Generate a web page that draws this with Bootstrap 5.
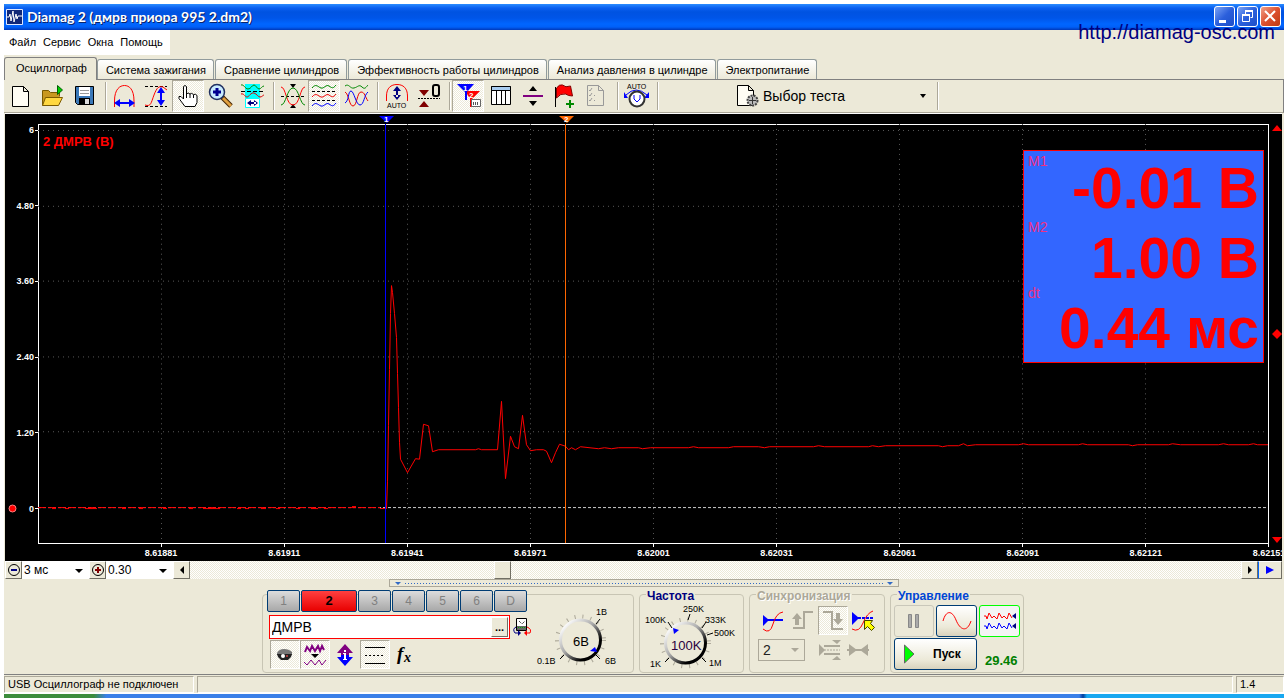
<!DOCTYPE html>
<html lang="ru">
<head>
<meta charset="utf-8">
<meta name="viewport" content="width=device-width, initial-scale=1">
<title>Diamag 2</title>
<link href="https://cdn.jsdelivr.net/npm/bootstrap@5.3.0/dist/css/bootstrap.min.css" rel="stylesheet">
<style>
:root{--face:#ece9d8;--line:#808080;--soft:#aca899}
body{font:11px/14px "Liberation Sans",Arial,sans-serif;color:#000;background:#fff}
button,select,input{font:inherit;color:inherit;border-radius:0}
svg{display:block;flex:none}
svg text{font-family:"Liberation Sans",Arial,sans-serif}
.app{padding:4px 4px 0;background:#fff}
.win{background:var(--face)}
.titlebar{height:26px;padding:0 3px 0 2px;color:#fff;font:bold 14px/24px Lato,"Open Sans",sans-serif;text-shadow:1px 1px 0 #0a246a;
 background:linear-gradient(#2a8cff 0,#0a5ff0 4px,#0053e1 8px,#0055e8 14px,#0066ff 20px,#0060f8 23px,#0038b8 26px)}
.capbtns{gap:2px;padding-top:2px}
.capbtn{width:21px;height:21px;padding:0;border:1px solid #fff;border-radius:3px;background:linear-gradient(135deg,#7ba3f5,#2b5fdc 50%,#1d4fc8)}
.capbtn.close-x{background:linear-gradient(135deg,#f0a088,#dc5030 50%,#c03a10)}
.site{top:17px;right:9px;font-size:20px;line-height:23px;color:#000080;text-decoration:none;z-index:2}
.menubar{height:25px}
.menubar ul{background:#fff;padding:0 7px 0 5px;gap:7px}
.menubar a{color:#000;text-decoration:none;line-height:25px}
.tabs{height:25px;gap:1px;border-bottom:1px solid var(--line)}
.tabs button{height:20px;padding:0 7px 0 8px;border:1px solid #919b9c;border-bottom:0;border-radius:3px 3px 0 0;background:linear-gradient(#fff,#ece9d8);white-space:nowrap}
.tabs button.on{height:23px;padding:0 9px 3px 11px;margin-right:-1px;margin-bottom:-1px;background:var(--face);border-color:var(--line)}
.tools{height:33px;border-bottom:1px solid var(--soft);border-right:1px solid var(--line)}
.tool{width:32px;height:32px;padding:0;border:1px solid transparent;background:none}
.sep{width:8px;height:28px;position:relative}
.sep::after{content:"";display:block;width:2px;height:28px;margin-left:5px;border-left:1px solid var(--soft);border-right:1px solid #fff}
.testbtn{width:200px;margin-left:72px;padding:0 6px 0 5px;border:0;background:none;font-size:14px}
.caret{width:0;height:0;border:3px solid transparent;border-top:4px solid #000;border-bottom:0}
.scope{flex:1 1 auto;min-height:448px;margin:0 2px 0 1px;background:#000;color:#fff;grid-template:10px 1fr 17px/33px 1fr 13px;overflow:hidden;font-weight:bold;border-top:1px solid #fff}
.plot{border:1px solid #fff;grid-area:2/2}
.plot>svg{position:absolute;left:-1px;top:-1px;width:calc(100% + 1px);height:calc(100% + 1px)}
.heads{grid-area:1/2}
.heads svg{position:absolute;top:1px;margin-left:-7px}
.ylab{grid-area:2/1;height:93%;font-size:9px;line-height:12px}
.ylab div::after{content:"";width:3px;height:1px;background:#fff;margin-left:1px}
.zero{left:3px;bottom:2px}
.xlab{grid-area:3/2;margin:0 -5% 0 5%;font-size:9px;line-height:18px}
.xlab div{background:linear-gradient(#fff,#fff) 50% 0/1px 3px no-repeat}
.rmarks{grid-area:2/3;padding-left:3px}
.channame{left:4px;top:10px;font-size:13px;color:#f00}
.readout{right:4px;top:25px;width:241px;height:213px;background:#36f;border:1px solid #f00;padding:2px 4px;color:#f00}
.readout .names{font-weight:normal;font-size:14px;line-height:16px;color:#f03080;display:grid;grid-auto-rows:66px}
.readout .vals{font-size:57px;line-height:70px;white-space:nowrap;text-align:right}
.bar{height:18px;background:repeating-conic-gradient(#fff 0 25%,#ece9d8 0 50%) 0 0/2px 2px;margin:0 2px 0 1px}
.bev{width:17px;height:18px;padding:0;border:1px solid;border-color:#fff #716f64 #716f64 #fff;background:var(--face);display:flex;align-items:center;justify-content:center}
.bev.fwd{width:24px;border-left-color:#06f}
.dd{position:relative}
.bar .dd{width:67px}
.dd select{appearance:none;width:100%;height:18px;border:0;background:#fff;padding:0 2px;font-size:12px}
.dd::after{content:"";position:absolute;right:6px;top:8px;border:4px solid transparent;border-top-color:#000;border-bottom:0;pointer-events:none}
.thumbgap{width:304px}
.splitter{width:510px;height:8px;border:1px solid var(--soft);padding:0 5px}
.splitter i{height:1px;background:repeating-linear-gradient(90deg,#316ac5 0 1px,transparent 1px 3px)}
.splitter b{border:3px solid transparent;border-top-color:#316ac5;border-bottom:0}
.panel{padding:7px 2px 1px 0;gap:5px;border-bottom:1px solid var(--line)}
.grp{position:relative;height:79px;border:1px solid #c8c5b4;border-radius:4px}
.grp legend{position:absolute;top:-6px;left:6px;width:auto;margin:0;padding:0 1px;font:bold 12px/14px "Liberation Sans",sans-serif;background:var(--face)}
.g-chan{width:372px}.g-chan>div{width:272px}.g-freq{width:105px}.g-sync{width:136px}.g-ctl{width:134px}
.g-freq legend{color:#000080}.g-sync legend{color:var(--soft);text-shadow:1px 1px 0 #fff}.g-ctl legend{color:#0046d5}
.chs{margin:-5px 0 3px 4px;gap:1px}
.chs button{width:33px;height:22px;border:1px solid #003c74;border-radius:2px;background:linear-gradient(#dcdcdc,#a8a8a8);color:#808080;font-size:12px;padding:0}
.chs button.live{width:56px;background:linear-gradient(#ff4040,#e80000);color:#000;font-weight:bold;font-size:13px}
.namerow{height:24px;gap:3px;margin:0 0 1px 6px}
.namebox{width:241px;height:24px;border:1px solid #f00;background:#fff}
.namebox input{min-width:0;border:0;padding:0 2px;font-size:14px;background:none;outline:0}
.namebox button{height:20px;margin:1px;font-weight:bold;line-height:8px}
.optrow{padding-left:7px}
.sq{width:30px;height:29px;padding:0;border:1px solid transparent;background:none;display:flex;align-items:center;justify-content:center}
.down{border-color:var(--soft) #fff #fff var(--soft);background:repeating-conic-gradient(#fff 0 25%,#ece9d8 0 50%) 0 0/2px 2px}
.serif{font:italic bold 19px "Liberation Serif",serif}
.serif-s{font:italic bold 14px "Liberation Serif",serif}
.sync{padding:11px 4px 0 8px}
.ctl{display:grid;grid-template-columns:40px 41px 41px;gap:1px 2px;padding:10px 0 0 3px}
.ctl button{height:32px;border:1px solid #003c74;border-radius:3px;background:linear-gradient(#fff,#ece9d8 70%,#d8d2bd);padding:0;display:flex;align-items:center;justify-content:center}
.ctl .off{border-color:#c9c7ba;background:var(--face)}
.ctl .lit{border-color:#0f0;background:#f4f4f4}
.ctl .run{grid-column:span 2;font-weight:bold;font-size:12px;justify-content:flex-start;padding-left:9px;gap:18px}
.fps{color:#008000;font-weight:bold;font-size:13px;padding:16px 0 0 6px}
.sync select{width:47px;height:22px;border:1px solid var(--soft);background:var(--face);padding:0 4px;font-size:14px;opacity:1;color:#222}
.sync .dd{height:22px}
.sync .dd::after{border-top-color:var(--soft);top:9px}
.status{height:18px;gap:3px;padding-top:1px}
.status div{border:1px solid;border-color:var(--soft) #fff #fff var(--soft);padding:0 3px;line-height:15px;white-space:nowrap}
.status .st-dev{width:190px}.status .st-ver{width:48px}
.taskbar{height:4px;margin-top:1px;background:linear-gradient(90deg,#3c8c3c 0 7%,#3a80e8 8% 84%,#003c9c 84.3%,#18a8f0 84.6%)}
</style>
</head>
<body>
<div class="app min-vh-100 d-flex flex-column">
<div class="win d-flex flex-column flex-grow-1 position-relative">
<header class="titlebar d-flex align-items-center">
 <svg width="17" height="16" viewBox="0 0 17 16"><path fill="#102878" stroke="#dfe8ff" d="M.5.5h16v15H.5z"/><path fill="none" stroke="#fff" d="M1 8h2l1-3 1 7 2-10 1 11 2-8 1 5 1-3h4"/></svg>
 <span class="ms-1 flex-grow-1">Diamag 2 (дмрв приора 995 2.dm2)</span>
 <div class="capbtns d-flex align-self-start">
  <button class="capbtn" aria-label="Свернуть"><svg width="19" height="19"><path fill="#fff" d="M4 13h7v3H4z"/></svg></button>
  <button class="capbtn" aria-label="Восстановить"><svg width="19" height="19" fill="none" stroke="#fff"><path d="M7.500 7V4.500h7v6h-2M4.500 8.500h7v6h-7z"/><path d="M7 4h8M4 8h8" stroke-width="2"/></svg></button>
  <button class="capbtn close-x" aria-label="Закрыть"><svg width="19" height="19"><path stroke="#fff" stroke-width="2" d="M4 4l10 10M14 4L4 14"/></svg></button>
 </div>
</header>
<a class="site position-absolute" href="#site">http://diamag-osc.com</a>
<nav class="menubar d-flex"><ul class="d-flex list-unstyled m-0">
 <li><a href="#file">Файл</a></li><li><a href="#service">Сервис</a></li><li><a href="#windows">Окна</a></li><li><a href="#help">Помощь</a></li></ul></nav>
<nav class="tabs d-flex align-items-end">
 <button class="on">Осциллограф</button><button>Система зажигания</button><button>Сравнение цилиндров</button><button>Эффективность работы цилиндров</button><button>Анализ давления в цилиндре</button><button>Электропитание</button>
</nav>

<div class="tools d-flex align-items-center">
 <button class="tool" aria-label="Новый"><svg width="30" height="30"><path fill="#fffdf4" stroke="#000" d="M7.500 5.500h11l5 5v15h-16zM18.500 5.500v5h5"/></svg></button>
 <button class="tool" aria-label="Открыть"><svg width="30" height="30"><path fill="#c89820" stroke="#7a5a00" d="M5.500 24.500v-15h6l2 2h9v4"/><path fill="#ffd840" stroke="#7a5a00" d="M5.500 24.500l3-8h17l-4 8z"/><path fill="#00d000" stroke="#006000" d="M20.500 4.500v9l5-4.500z"/></svg></button>
 <button class="tool" aria-label="Сохранить"><svg width="30" height="30"><path fill="#3a78b8" stroke="#000" d="M6.500 5.500h18v18h-16l-2-2z"/><path fill="#fff" d="M10 6h11v9H10z"/><path stroke="#999" d="M11 9.500h9M11 12.500h9"/><path fill="#000" d="M10 17h11v6H10z"/><path fill="#ddd" d="M16 18h4v5h-4z"/></svg></button>
 <span class="sep"></span>
 <button class="tool" aria-label="По горизонтали"><svg width="30" height="30"><path fill="none" stroke="#f00" d="M5.500 26v-6C5.500 8 11 4.500 15.500 4.500S25 8 25 20v6"/><path fill="#00f" d="M5 22l6-4v8zM26 22l-6-4v8z"/><path stroke="#00f" stroke-width="2" d="M8 22h14"/></svg></button>
 <button class="tool" aria-label="По вертикали"><svg width="30" height="30"><path stroke="#000" stroke-dasharray="3 2" d="M4 5.500h22M4 25.500h22"/><path fill="none" stroke="#f00" d="M4 24c6 2 6-2 9-10s5-9 9-8l4 3"/><path fill="#00f" d="M20 6l4 6h-8zM20 25l4-6h-8z"/><path stroke="#00f" stroke-width="2" d="M20 10v12"/></svg></button>
 <button class="tool down" aria-label="Рука"><svg width="30" height="30"><path fill="#fff" stroke="#000" d="M10.500 18V5.500q1.500-2 3 0V13q1.500-2 3.500 0 1.500-1.500 3.500.5 2-1 3.500 1v7l-2 4h-10l-6-8q-1-3 2-2zM13.500 13v4M17 13v4M20.500 14v3"/></svg></button>
 <button class="tool" aria-label="Увеличить"><svg width="30" height="30"><path stroke="#402000" stroke-width="5" d="M17 16l9 9"/><path stroke="#e0a040" stroke-width="3" d="M18 17l8 8"/><circle cx="12" cy="11" r="7.500" fill="#c8ecff" stroke="#203060" stroke-width="1.500"/><path stroke="#000090" stroke-width="3" d="M12 7v8M8 11h8"/></svg></button>
 <button class="tool" aria-label="Окно"><svg width="30" height="30"><path fill="#0ff" d="M8 3h15v14H8z"/><path fill="#fff" stroke="#0ff" d="M8.500 17.500h14v9h-14z"/><path stroke="#000" stroke-dasharray="4 2" d="M4 10.500h23"/><path fill="none" stroke="#080" d="M4 4c3-1 4 4 7 4s4-4 6-4 3 4 5 4 3-3 5-3"/><path fill="none" stroke="#d00" d="M4 13c3-1 4 3 6 3s4-5 7-4 4 4 6 4 3-2 4-2"/><path fill="#000080" d="M10 22l4-3v6zM21 22l-4-3v6zM12 21h7v2h-7z"/></svg></button>
 <span class="sep"></span>
 <button class="tool" aria-label="Инверсия"><svg width="30" height="30"><path fill="#000" d="M13 3h6l-3 4zM13 27h6l-3-4z"/><path stroke="#000" stroke-dasharray="3 2" d="M4 15.500h24"/><path fill="none" stroke="#f00" d="M4 6c5 0 5 18 12 18s7-18 12-18"/><path fill="none" stroke="#080" d="M4 24c5 0 6-17 12-17s7 17 12 17"/></svg></button>
 <button class="tool down" aria-label="Раздельно"><svg width="30" height="30" fill="none"><path stroke="#080" d="M3 7c4-5 6-1 9 0s5-4 8-2 4 3 7-1"/><path stroke="#e00" d="M3 16c4-5 6-1 9 0s5-4 8-2 4 3 7-1"/><path stroke="#00f" d="M3 25c4-5 6-1 9 0s5-4 8-2 4 3 7-1"/><path stroke="#000" stroke-dasharray="3 2" d="M3 10.500h25M3 19.500h25"/></svg></button>
 <button class="tool" aria-label="Вместе"><svg width="30" height="30" fill="none"><path stroke="#080" d="M4 5c4-3 5 3 9 2s5-4 8-1 4 0 6-2"/><path stroke="#e00" d="M4 11c4 2 4 14 8 14s4-14 8-14 4 5 7 9"/><path stroke="#00f" d="M4 22c4-2 3-12 6-12s5 14 9 14 4-10 8-13"/></svg></button>
 <span class="sep"></span>
 <button class="tool" aria-label="Авто амплитуда"><svg width="30" height="30"><path fill="none" stroke="#f00" d="M5.500 20V15C5.500 7 10 3.500 16 3.500S26.500 7 26.500 15v5"/><path fill="#000080" d="M16 5l4 5h-8zM16 19l4-5h-8zM15 8h2v8h-2z"/><text x="6" y="27" font-size="7">AUTO</text></svg></button>
 <button class="tool" aria-label="Ноль"><svg width="30" height="30"><path fill="#800000" d="M6 9h10l-5 6zM6 26h10l-5-6z"/><path stroke="#000" stroke-dasharray="2 1" d="M5 17.500h22"/><rect x="20" y="4" width="6" height="11" rx="2" fill="none" stroke="#000" stroke-width="2"/></svg></button>
 <span class="sep"></span>
 <button class="tool down" aria-label="Маркеры"><svg width="30" height="30"><path fill="#f00" d="M12 10h15l-9 9zM17 17h2v9h-2z"/><path fill="#00f" d="M4 3h17l-8 9zM12 10h2v9h-2z"/><text x="10" y="10" font-size="8" font-weight="bold" fill="#fff">1</text><text x="16" y="17" font-size="8" font-weight="bold" fill="#fff">2</text><path fill="#fff" stroke="#666" d="M18.500 18.500h9v7h-9z"/><path stroke="#555" d="M20.500 21v3M22.500 21v3M24.500 21v3"/></svg></button>
 <button class="tool" aria-label="Таблица"><svg width="30" height="30"><path fill="#fff" stroke="#000" d="M6.500 5.500h19v18h-19z"/><path fill="#a8ccf0" stroke="#000" d="M6.500 5.500h19v4h-19z"/><path stroke="#000" d="M11.500 10v14M16.500 10v14M20.500 10v14"/></svg></button>
 <button class="tool" aria-label="Разделить"><svg width="30" height="30"><path fill="#000" d="M12 10h8l-4-5zM12 20h8l-4 5z"/><path fill="#800080" d="M6 14h20v2H6z"/></svg></button>
 <button class="tool" aria-label="Добавить флаг"><svg width="30" height="30"><path fill="#f00" stroke="#800000" d="M7.500 17V7q3-4 6-3 3 3 8 1l2 10q-4 0-7-2-5-1-9 4"/><path stroke="#000" d="M6.500 6v20"/><path stroke="#080" stroke-width="2" d="M21 19v8M17 23h8"/></svg></button>
 <button class="tool" aria-label="Список"><svg width="30" height="30" fill="none" stroke="#999"><path d="M6.500 4.500h11l5 5v15h-16zM17.500 4.500v5h5"/><path d="M8 9l1 1 2-3M8 14l1 1 2-3M8 19l1 1 2-3M13 14.500h1M13 19.500h1"/></svg></button>
 <span class="sep"></span>
 <button class="tool" aria-label="Авто напряжение"><svg width="30" height="30"><text x="6" y="8" font-size="7">AUTO</text><path fill="none" stroke="#00f" d="M5 14q10-10 21 0"/><path fill="#00f" d="M3 11v6h4zM28 11v6h-5z"/><circle cx="16" cy="18" r="7.500" fill="#fff" stroke="#333" stroke-width="2"/><path fill="none" stroke="#00f" d="M13 14v4l3 3 3-3v-4"/></svg></button>
 <span class="sep"></span>
 <button class="testbtn d-flex align-items-center"><svg width="26" height="26"><path fill="#fffdf4" stroke="#000" d="M.500 2.500h11l5 5v15h-16zM11.500 2.500v5h5"/><circle cx="15.500" cy="17.500" r="5" fill="#bbb" stroke="#444" stroke-width="2" stroke-dasharray="2 1"/><path stroke="#333" d="M12 17.500h7M15.500 14v7"/></svg><span class="flex-grow-1 text-start">Выбор теста</span><span class="caret"></span></button>
 <span class="sep"></span>
</div>

<main class="scope d-grid">
 <div class="heads position-relative">
  <svg width="15" height="9" style="left:28.25%"><path fill="#00f" d="M0 1h15L8 8z"/><text x="5" y="7" font-size="8" font-weight="bold" fill="#fff">1</text></svg>
  <svg width="15" height="9" style="left:42.89%"><path fill="#f60" d="M0 1h15L8 8z"/><text x="5" y="7" font-size="8" font-weight="bold" fill="#fff">2</text></svg>
 </div>
 <div class="ylab position-relative d-flex flex-column justify-content-between">
  <div class="d-flex align-items-center justify-content-end">6</div><div class="d-flex align-items-center justify-content-end">4.80</div><div class="d-flex align-items-center justify-content-end">3.60</div><div class="d-flex align-items-center justify-content-end">2.40</div><div class="d-flex align-items-center justify-content-end">1.20</div><div class="d-flex align-items-center justify-content-end">0</div>
  <svg class="zero position-absolute" width="9" height="9"><circle cx="4.500" cy="4.500" r="3.500" fill="#f00" stroke="#ff8080"/></svg>
 </div>
 <div class="plot position-relative">
  <svg viewBox="0 0 1230 420" preserveAspectRatio="none" fill="none" shape-rendering="crispEdges">
   <path stroke="#585858" stroke-dasharray="1 4" d="M0 6.500h1230M0 82.500h1230M0 157.500h1230M0 233.500h1230M0 308.500h1230M123.500 0v420M246.500 0v420M369.500 0v420M492.500 0v420M615.500 0v420M738.500 0v420M861.500 0v420M984.500 0v420M1107.500 0v420"/>
   <path stroke="#ccc" stroke-dasharray="3 2" d="M0 384.500h1230"/>
   <path stroke="#f00" stroke-dasharray="8 2" d="M0 384.500H342"/>
   <path stroke="#f00" d="M14 385.500h4M27 385.500h4M47 385.500h12M84 385.500h4M101 385.500h4M125 385.500h4M151 385.500h4M165 385.500h17M199 385.500h4M207 385.500h4M223 385.500h5M238 385.500h4M258 385.500h4M273 385.500h7M286 385.500h4M314 383.500h4M342 385.500H348.500L349.500 358 350.500 302 351.500 246 352.500 190 353.500 162 354.500 169 356.500 190 358.500 214 359.500 250 360.500 284 361.500 319 362.500 336 369.500 349.500 377.500 335.500 381.500 336 385.500 301 390.500 302.500 394.500 328.500 400.500 326.500H437.500l3-1 3 1H459.500L463.500 278 467.500 355.500 472.500 313 476.500 323.500 480.500 325.500 484.500 292 488.500 321.500 492.500 327.500 498.500 326.500H505.500L508.500 328 513.500 339.500 517.500 329.500 521.500 321 527.500 323 530.500 326.500 533.500 324.500 537.500 326.500 542.500 323.500 560.500 325.500 566.500 324.500 573.500 325.500 580.500 324.500H600.500l4 1 8-1H650.500l5-1 5 1H690.500l5-1H720.500l6 1 5-1H775.500l5-1 6 1H830.500l4-1 6 1 7-1H900.500l4 1 5-1H920.500l5-2 4 2 8-1H980.500l5-1 5 1H1040.500l4-1 5 1H1090.500l4 1 5-1H1130.500l4-1 8 1H1180.500l5-1 5 1H1210.500l5-1 4 1H1230"/>
   <path stroke="#00f" d="M347.500 0v420"/><path stroke="#f60" d="M527.500 0v420"/>
  </svg>
  <div class="channame position-absolute">2 ДМРВ (В)</div>
  <div class="readout position-absolute d-flex justify-content-between">
   <div class="names"><span>M1</span><span>M2</span><span>dt</span></div>
   <div class="vals"><div>-0.01 В</div><div>1.00 В</div><div>0.44 мс</div></div>
  </div>
 </div>
 <div class="rmarks d-flex flex-column justify-content-between">
  <svg width="10" height="8"><path fill="#f00" d="M0 7l5-6 5 6z"/></svg><svg width="10" height="10"><path fill="#f00" d="M5 0l5 5-5 5-5-5z"/></svg><svg width="10" height="8"><path fill="#f00" d="M0 1l5 6 5-6z"/></svg>
 </div>
 <div class="xlab row row-cols-10 flex-nowrap gx-0 text-center">
  <div class="col">8.61881</div><div class="col">8.61911</div><div class="col">8.61941</div><div class="col">8.61971</div><div class="col">8.62001</div><div class="col">8.62031</div><div class="col">8.62061</div><div class="col">8.62091</div><div class="col">8.62121</div><div class="col">8.62151</div>
 </div>
</main>

<div class="bar d-flex">
 <button class="bev" aria-label="Уменьшить"><svg width="14" height="14"><circle cx="7" cy="7" r="5.500" fill="none" stroke="#000"/><path fill="#000080" d="M4 6h6v2H4z"/></svg></button>
 <div class="dd"><select aria-label="Длительность"><option>3 мс</option></select></div>
 <button class="bev" aria-label="Увеличить"><svg width="14" height="14"><circle cx="7" cy="7" r="5.500" fill="none" stroke="#000"/><path fill="#800000" d="M4 6h6v2H4zM6 4h2v6H6z"/></svg></button>
 <div class="dd"><select aria-label="Масштаб"><option>0.30</option></select></div>
 <button class="bev" aria-label="Влево"><svg width="6" height="8"><path d="M5 0v8L1 4z"/></svg></button>
 <span class="thumbgap"></span><button class="bev" aria-label="Позиция"></button>
 <button class="bev ms-auto" aria-label="Вправо"><svg width="6" height="8"><path d="M1 0v8l4-4z"/></svg></button>
 <button class="bev fwd" aria-label="Вперёд"><svg width="10" height="8"><path fill="#00f" d="M1 0v8l8-4z"/></svg></button>
</div>
<div class="splitter mx-auto d-flex align-items-center gap-1"><b></b><i class="flex-grow-1"></i><b></b></div>

<section class="panel d-flex justify-content-center">
 <fieldset class="grp g-chan d-flex">
  <div>
   <div class="chs d-flex"><button>1</button><button class="live">2</button><button>3</button><button>4</button><button>5</button><button>6</button><button>D</button></div>
   <div class="namerow d-flex align-items-center"><div class="namebox d-flex"><input class="flex-grow-1" aria-label="Имя канала" value="ДМРВ"><button class="bev">...</button></div>
    <svg width="19" height="20"><path fill="#fff" stroke="#000" d="M3.500 1.500h10v12h-10z"/><path fill="#666" d="M4 9h9v4H4z"/><path stroke="#0a0" stroke-dasharray="1 1" d="M5 10.500h8"/><path fill="none" stroke="#000" stroke-dasharray="1 1" d="M6 4l3 3 3-3"/><path fill="none" stroke="#000080" d="M3 10q-4 2-1 6h4"/><path fill="#000080" d="M5 13l3 3-3 3z"/><path fill="none" stroke="#f00" d="M14 10q5 2 3 6h-5"/><path fill="#f00" d="M14 13l-3 3 3 3z"/></svg></div>
   <div class="optrow d-flex">
    <button class="sq down" aria-label="Видимость"><svg width="20" height="16"><path fill="#777" d="M2 6q2-4 7-4t8 3v3H2z"/><path fill="#222" d="M2 7h15l-1 3-3 3H6L3 10z"/><circle cx="8" cy="9" r="2" fill="#fff"/><circle cx="12" cy="9" r="1" fill="#c44"/></svg></button>
    <button class="sq down" aria-label="Сглаживание"><svg width="24" height="24"><path fill="none" stroke="#800080" stroke-width="2" d="M2 9l2-5 3 4 2-5 3 5 3-5 2 5 2-5 2 4"/><path d="M8 11h8l-4 4z"/><path fill="none" stroke="#800080" d="M1 19l3 3 4-5 4 5 4-5 3 5 4-5"/></svg></button>
    <button class="sq" aria-label="Инверсия"><svg width="18" height="24"><path fill="#800080" d="M9 1l8 9h-4v2H5v-2H1z"/><path fill="#00f" d="M9 23l8-9h-4v-2H5v2H1z"/><path fill="#fff" d="M8 7h2v2H8zM7 10h3v6h1v1H7v-1h1v-5H7z"/></svg></button>
    <button class="sq down" aria-label="Линии"><svg width="22" height="20"><path stroke="#000" d="M1 2.500h20M1 18.500h20"/><path stroke="#000" stroke-dasharray="2 2" d="M1 10.500h20"/></svg></button>
    <button class="sq" aria-label="Функция"><svg width="20" height="22"><text class="serif" x="2" y="16">f</text><text class="serif-s" x="9" y="18">x</text></svg></button>
   </div>
  </div>
  <svg width="98" height="77" font-size="9">
   <defs><linearGradient id="rim" x1="0" y1="0" x2="1" y2="1"><stop offset=".1" stop-color="#fff"/><stop offset=".45" stop-color="#aaa"/><stop offset=".75" stop-color="#000"/></linearGradient></defs>
   <circle cx="45.500" cy="45" r="23.500" fill="none" stroke="#aca899" stroke-width="4" stroke-dasharray="1 7"/>
   <circle cx="45.500" cy="45" r="20" fill="#ece9d8" stroke="url(#rim)" stroke-width="3"/>
   <path stroke="#000" d="M61 29l4-5M61 60l4 4M29 60l-4 4"/><path fill="#00f" d="M55 56l5-4 2 5z"/>
   <text x="61" y="20">1В</text><text x="70" y="69">6В</text><text x="2" y="69">0.1В</text><text x="38" y="51" font-size="13">6В</text></svg>
 </fieldset>
 <fieldset class="grp g-freq"><legend>Частота</legend>
  <svg width="103" height="77" font-size="9">
   <circle cx="45.500" cy="48" r="23.500" fill="none" stroke="#aca899" stroke-width="4" stroke-dasharray="1 7"/>
   <circle cx="45.500" cy="48" r="20" fill="#ece9d8" stroke="url(#rim)" stroke-width="3"/>
   <path stroke="#000" d="M48 25l2-6M62 33l4-6M67 40l6-2M62 63l4 4M29 63l-4 4M32 33l-4-6"/><path fill="#00f" d="M33 33l6 2-5 4z"/>
   <text x="5" y="28">100K</text><text x="43" y="17">250K</text><text x="65" y="28">333K</text><text x="74" y="41">500K</text><text x="10" y="72">1K</text><text x="69" y="71">1M</text><text x="31" y="55" font-size="13" fill="#2a0040">100K</text></svg>
 </fieldset>
 <fieldset class="grp g-sync"><legend>Синхронизация</legend>
  <div class="sync d-flex flex-wrap">
   <button class="sq" aria-label="Уровень"><svg width="24" height="26"><path fill="#00f" d="M2 7l6 5-6 6z"/><path stroke="#00f" stroke-width="2" d="M2 12h20"/><path fill="none" stroke="#f00" d="M2 21q7 6 10-5t10-12"/></svg></button>
   <button class="sq" aria-label="Фронт"><svg width="24" height="24"><path fill="none" stroke="#aca899" stroke-width="2" d="M2 19h11V3h9"/><path fill="#aca899" d="M6 4l5 6H8v6H4v-6H1z"/></svg></button>
   <button class="sq down" aria-label="Спад"><svg width="24" height="24"><path fill="none" stroke="#aca899" stroke-width="2" d="M2 3h9v17h11"/><path fill="#aca899" d="M17 16l5-6h-3V4h-4v6h-3z"/></svg></button>
   <button class="sq" aria-label="Указать"><svg width="26" height="26"><path fill="#00f" d="M2 4l7 6-7 7z"/><path stroke="#00f" stroke-width="2" stroke-dasharray="3 1" d="M8 10h16"/><path fill="none" stroke="#f00" d="M2 21q7 4 11-6T23 3"/><path fill="#ff0" stroke="#440" d="M14.500 12.500h8l-2 3 4 4-3 3-4-4-3 3z"/></svg></button>
   <div class="dd mt-1"><select aria-label="Канал" disabled><option>2</option></select></div>
   <button class="sq ms-2 ps-1" aria-label="Окно уровня"><svg width="24" height="24"><path fill="#aca899" d="M1 6l6 6-6 6zM14 2h9l-4 4zM14 22h9l-4-4z"/><path stroke="#aca899" stroke-width="2" d="M6 8h16M6 16h16"/><path stroke="#aca899" stroke-dasharray="2 1" d="M6 12h16"/></svg></button>
   <button class="sq" aria-label="Ширина"><svg width="24" height="20"><path fill="#aca899" d="M3 4l8 6-8 6zM22 4l-8 6 8 6z"/><path stroke="#aca899" stroke-width="2" d="M1 10h22"/></svg></button>
  </div>
 </fieldset>
 <fieldset class="grp g-ctl"><legend>Управление</legend>
  <div class="ctl">
   <button class="off" aria-label="Пауза"><svg width="14" height="16"><path fill="#aaa" stroke="#888" d="M1.500 1.500h3v13h-3zM8.500 1.500h3v13h-3z"/></svg></button>
   <button aria-label="Сигнал"><svg width="30" height="22"><path fill="none" stroke="#f00" d="M1 11C4 0 10 0 14 10s11 13 15 1"/></svg></button>
   <button class="lit" aria-label="Сигналы"><svg width="34" height="22" fill="none"><path stroke="#f00" d="M1 6h2l1 3 2-6 3 5 2-2 3 3 2-6 3 5 2-2 3 3 2-6 3 5"/><path stroke="#00f" d="M1 16h2l1 3 2-6 3 5 2-2 3 3 2-6 3 5 2-2 3 3 2-6 3 5"/><path fill="#000080" d="M33 3v6l-4-3zM33 13v6l-4-3z"/></svg></button>
   <button class="run"><svg width="11" height="20"><path fill="#0f0" stroke="#666" d="M.500 1v18l9.500-9z"/></svg><span>Пуск</span></button>
   <div class="fps">29.46</div>
  </div>
 </fieldset>
</section>
<footer class="status d-flex"><div class="st-dev">USB Осциллограф не подключен</div><div class="flex-grow-1"></div><div class="st-ver">1.4</div></footer>
</div>
<div class="taskbar"></div>
</div>
<script src="https://cdn.jsdelivr.net/npm/bootstrap@5.3.0/dist/js/bootstrap.bundle.min.js"></script>
</body>
</html>
